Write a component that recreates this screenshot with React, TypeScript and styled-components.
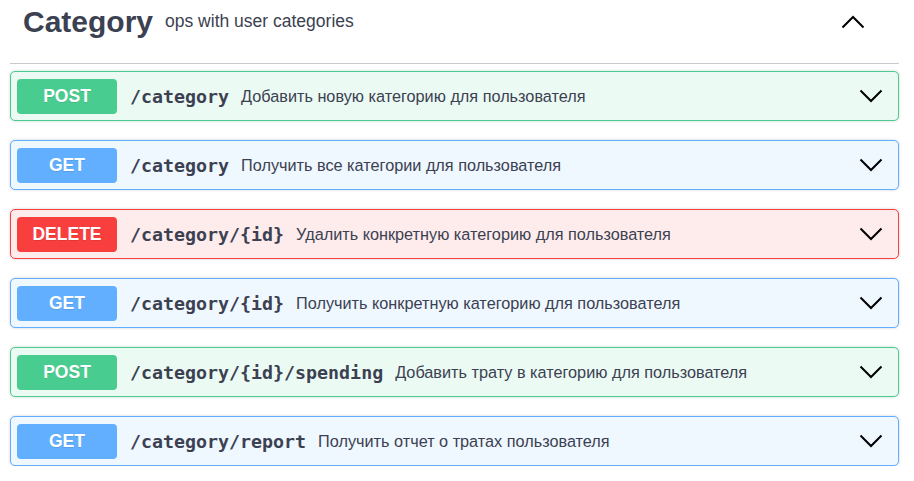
import React from "react";
import styled, { createGlobalStyle } from "styled-components";

const Global = createGlobalStyle`
  html, body { margin: 0; padding: 0; background: #fff; }
  body { font-family: "Liberation Sans", Arial, sans-serif; color: #3b4151; }
`;

type Method = "POST" | "GET" | "DELETE";

const palette: Record<Method, { main: string; bg: string }> = {
  POST: { main: "#49cc90", bg: "#ecfaf4" },
  GET: { main: "#61affe", bg: "#eff7ff" },
  DELETE: { main: "#f93e3e", bg: "#feecec" },
};

const Page = styled.div`
  padding: 0 15px 0 10px;
`;

const TagHeader = styled.div`
  display: flex;
  align-items: center;
  height: 64px;
  padding: 0 33px 20px 13px;
  border-bottom: 1px solid #c9c9cf;
  box-sizing: border-box;
`;

const Title = styled.span`
  font-size: 30px;
  line-height: 30px;
  font-weight: 700;
  color: #3b4151;
`;

const Subtitle = styled.span`
  font-size: 17.5px;
  color: #3b4151;
  margin-left: 12px;
  flex: 1;
`;

const UpBtn = styled.div`
  width: 26px;
  height: 26px;
  display: flex;
  align-items: center;
  justify-content: center;
`;

const List = styled.div`
  display: flex;
  flex-direction: column;
  gap: 19px;
  padding-top: 7px;
`;

const Block = styled.div<{ $m: Method }>`
  display: flex;
  align-items: center;
  height: 50px;
  box-sizing: border-box;
  padding: 0 6px;
  border: 1px solid ${(p) => palette[p.$m].main};
  background: ${(p) => palette[p.$m].bg};
  border-radius: 5px;
  box-shadow: 0 0 3px rgba(0, 0, 0, 0.19);
`;

const Badge = styled.span<{ $m: Method }>`
  width: 100px;
  height: 35px;
  display: flex;
  align-items: center;
  justify-content: center;
  background: ${(p) => palette[p.$m].main};
  color: #fff;
  border-radius: 4px;
  font-size: 17.5px;
  font-weight: 700;
  text-shadow: 0 1px 0 rgba(0, 0, 0, 0.1);
  flex: none;
`;

const Path = styled.span`
  font-family: "DejaVu Sans Mono", monospace;
  font-weight: 700;
  font-size: 18.3px;
  color: #3b4151;
  margin-left: 13px;
`;

const Desc = styled.span`
  font-size: 16.25px;
  color: #3b4151;
  margin-left: 12px;
  flex: 1;
`;

const Arrow = styled.div`
  width: 26px;
  height: 26px;
  display: flex;
  align-items: center;
  justify-content: center;
  margin-right: 8px;
`;

const Chevron = ({ up }: { up?: boolean }) => (
  <svg width="24" height="14" viewBox="0 0 24 14">
    <polyline
      points={up ? "1.5,12.5 12,2 22.5,12.5" : "1.5,1.5 12,12 22.5,1.5"}
      fill="none"
      stroke="#000"
      strokeWidth="2"
    />
  </svg>
);

const ops: { m: Method; path: string; desc: string }[] = [
  { m: "POST", path: "/category", desc: "Добавить новую категорию для пользователя" },
  { m: "GET", path: "/category", desc: "Получить все категории для пользователя" },
  { m: "DELETE", path: "/category/{id}", desc: "Удалить конкретную категорию для пользователя" },
  { m: "GET", path: "/category/{id}", desc: "Получить конкретную категорию для пользователя" },
  { m: "POST", path: "/category/{id}/spending", desc: "Добавить трату в категорию для пользователя" },
  { m: "GET", path: "/category/report", desc: "Получить отчет о тратах пользователя" },
];

export default function App() {
  return (
    <>
      <Global />
      <Page>
        <TagHeader>
          <Title>Category</Title>
          <Subtitle>ops with user categories</Subtitle>
          <UpBtn>
            <Chevron up />
          </UpBtn>
        </TagHeader>
        <List>
          {ops.map((o, i) => (
            <Block key={i} $m={o.m}>
              <Badge $m={o.m}>{o.m}</Badge>
              <Path>{o.path}</Path>
              <Desc>{o.desc}</Desc>
              <Arrow>
                <Chevron />
              </Arrow>
            </Block>
          ))}
        </List>
      </Page>
    </>
  );
}
